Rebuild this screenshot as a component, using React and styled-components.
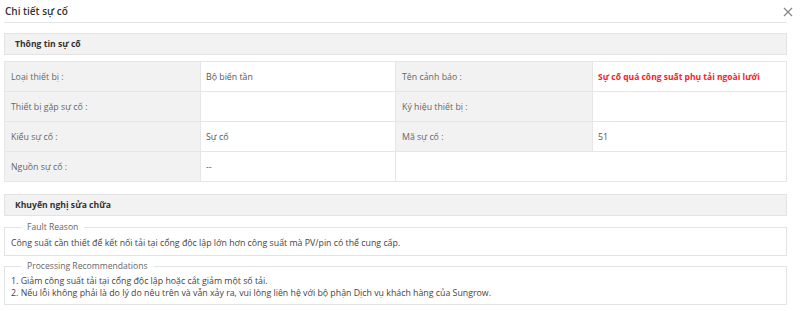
import React from 'react';
import styled, { createGlobalStyle } from 'styled-components';

const GlobalStyle = createGlobalStyle`
  html, body {
    margin: 0;
    padding: 0;
    background: #fff;
    font-family: "Open Sans", "Noto Sans", sans-serif;
    color: #555;
  }
`;

const Modal = styled.div`
  width: 800px;
  height: 311px;
  padding: 0 13px 0 4px;
  box-sizing: border-box;
  overflow: hidden;
`;

const Header = styled.div`
  display: flex;
  align-items: center;
  justify-content: space-between;
  height: 23px;
  border-bottom: 1px solid #e6e6e6;
  box-sizing: border-box;
`;

const Title = styled.h2`
  margin: 0 0 0 1px;
  font-size: 10px;
  font-weight: 600;
  color: #333;
`;

const Close = styled.button`
  border: none;
  background: none;
  padding: 0;
  margin-right: -6px;
  margin-top: 1px;
  display: flex;
  color: #888;
  cursor: pointer;
`;

const SectionHead = styled.div`
  margin-top: ${p => p.top}px;
  height: 22px;
  display: flex;
  align-items: center;
  padding-left: 10px;
  background: #f2f2f2;
  border: 1px solid #e3e3e3;
  box-sizing: border-box;
  font-size: 8.6px;
  font-weight: 700;
  color: #333;
`;

const Table = styled.table`
  margin-top: 6px;
  width: 100%;
  border-collapse: collapse;
  table-layout: fixed;
  font-size: 8.8px;
  border: 1px solid #e6e6e6;
`;

const Label = styled.td`
  background: #f2f2f2;
  height: 29px;
  padding: 0 0 0 6px;
  border: 1px solid #e6e6e6;
  color: #666;
`;

const Value = styled.td`
  background: #fff;
  height: 29px;
  padding: 0 0 0 5px;
  border: 1px solid #e6e6e6;
  white-space: nowrap;
  color: ${p => (p.alert ? '#f5222d' : '#555')};
  font-weight: ${p => (p.alert ? 700 : 400)};
  font-size: ${p => (p.alert ? '8.5px' : 'inherit')};
`;

const Box = styled.fieldset`
  margin: ${p => p.top}px 0 0;
  padding: 0 0 ${p => p.bottom}px 6px;
  border: 1px solid #e3e3e3;
  font-size: 8.8px;
  color: #444;
  line-height: 12px;
`;

const Legend = styled.legend`
  margin-left: 10px;
  padding: 0 6px;
  font-size: 8.6px;
  color: #666;
  line-height: 12px;
`;

const Line = styled.div`
  margin-top: ${p => p.gap || 0}px;
`;

const rows = [
  ['Loại thiết bị :', 'Bộ biến tần', 'Tên cảnh báo :', 'Sự cố quá công suất phụ tải ngoài lưới', true],
  ['Thiết bị gặp sự cố :', '', 'Ký hiệu thiết bị :', ''],
  ['Kiểu sự cố :', 'Sự cố', 'Mã sự cố :', '51'],
];

export default function App() {
  return (
    <>
      <GlobalStyle />
      <Modal>
        <Header>
          <Title>Chi tiết sự cố</Title>
          <Close aria-label="close">
            <svg width="10" height="10" viewBox="0 0 10 10" stroke="currentColor" strokeWidth="1.3">
              <path d="M1 1L9 9M9 1L1 9" />
            </svg>
          </Close>
        </Header>

        <SectionHead top={10}>Thông tin sự cố</SectionHead>
        <Table>
          <colgroup>
            <col style={{ width: '196px' }} />
            <col style={{ width: '195px' }} />
            <col style={{ width: '197px' }} />
            <col />
          </colgroup>
          <tbody>
            {rows.map(([l1, v1, l2, v2, alert]) => (
              <tr key={l1}>
                <Label>{l1}</Label>
                <Value>{v1}</Value>
                <Label>{l2}</Label>
                <Value alert={alert}>{v2}</Value>
              </tr>
            ))}
            <tr>
              <Label>Nguồn sự cố :</Label>
              <Value>--</Value>
              <Value colSpan={2} />
            </tr>
          </tbody>
        </Table>

        <SectionHead top={12}>Khuyến nghị sửa chữa</SectionHead>
        <Box top={5} bottom={6}>
          <Legend>Fault Reason</Legend>
          <Line gap={4}>Công suất cần thiết để kết nối tải tại cổng độc lập lớn hơn công suất mà PV/pin có thể cung cấp.</Line>
        </Box>
        <Box top={4} bottom={5}>
          <Legend>Processing Recommendations</Legend>
          <Line gap={3}>1. Giảm công suất tải tại cổng độc lập hoặc cắt giảm một số tải.</Line>
          <Line>2. Nếu lỗi không phải là do lý do nêu trên và vẫn xảy ra, vui lòng liên hệ với bộ phận Dịch vụ khách hàng của Sungrow.</Line>
        </Box>
      </Modal>
    </>
  );
}
